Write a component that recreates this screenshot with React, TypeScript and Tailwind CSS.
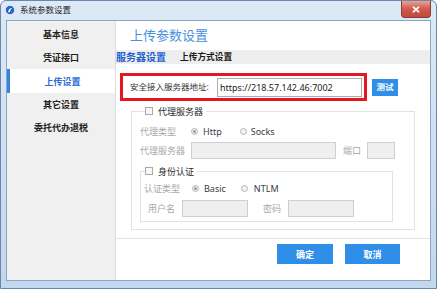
import React from "react";

function Radio({ checked }: { checked?: boolean }) {
  return (
    <span className="w-[7px] h-[7px] rounded-full border border-[#b5b5b5] bg-[#f3f3f3] flex items-center justify-center shrink-0">
      {checked && <span className="w-[3px] h-[3px] rounded-full bg-[#9c9c9c]" />}
    </span>
  );
}

function Check() {
  return <span className="w-[8px] h-[8px] border border-[#a8a8a8] bg-[#f7f7f7] shrink-0" />;
}

function Field({ w }: { w: string }) {
  return <div className={`h-[17px] border border-[#cfcfcf] bg-[#efefef] ${w}`} />;
}

export default function App() {
  const items = ["基本信息", "凭证接口", "上传设置", "其它设置", "委托代办退税"];
  return (
    <div className="w-[437px] h-[289px] bg-white font-['Noto_Sans','Noto_Sans_CJK_SC',sans-serif]">
      <div className="w-full h-full flex flex-col border border-[#6a86aa] rounded-t-[6px] bg-gradient-to-b from-[#dde9f6] to-[#c3d7ed] overflow-hidden">
        {/* title bar */}
        <div className="h-[19px] flex items-start shrink-0">
          <div className="flex items-center h-[18px] pl-[4px] gap-[5px]">
            <svg width="10" height="10" viewBox="0 0 10 10">
              <circle cx="5" cy="5" r="4.6" fill="#2364c4" stroke="#e8f0fa" strokeWidth="0.8" />
              <path d="M3 7 C3.5 4.5 5 3 7.2 2.8 C6 4 5.2 5.5 4.8 7.3 Z" fill="#ffffff" />
            </svg>
            <span className="text-[8.5px] leading-none text-[#1e1e1e]">系统参数设置</span>
          </div>
          <div className="ml-auto mr-[5px] w-[30px] h-[17px] rounded-b-[4px] border border-t-0 border-[#8b3b33] bg-gradient-to-b from-[#e6a296] via-[#d0594c] to-[#c4473b] flex items-center justify-center">
            <svg width="8" height="7" viewBox="0 0 8 7">
              <path d="M1 0.8 L7 6.2 M7 0.8 L1 6.2" stroke="#ffffff" strokeWidth="1.8" />
            </svg>
          </div>
        </div>

        {/* client */}
        <div className="flex-1 ml-[5px] mr-[5px] mb-[7px] border border-[#8ba5c4] flex bg-white">
          {/* sidebar */}
          <div className="w-[109px] shrink-0 bg-[#f0f0f0] border-r border-[#dcdcdc] pt-[2px] flex flex-col">
            {items.map((t, i) =>
              i === 2 ? (
                <div
                  key={t}
                  className="h-[24px] flex items-center justify-center bg-white border-l-[3px] border-[#3286e0] text-[9px] font-bold text-[#2b6dd6] leading-none"
                >
                  {t}
                </div>
              ) : (
                <div
                  key={t}
                  className="h-[23px] flex items-center justify-center text-[9px] font-bold text-[#222] leading-none"
                >
                  {t}
                </div>
              )
            )}
          </div>

          {/* content */}
          <div className="flex-1 flex flex-col">
            <div className="h-[217px] flex flex-col">
              <div className="h-[29px] flex items-center pl-[14px] text-[13px] leading-none text-[#4a90e0]">
                上传参数设置
              </div>
              <div className="h-[14px] bg-[#eeeeee] flex items-center leading-none">
                <span className="text-[10px] font-bold text-[#1f5fd0]">服务器设置</span>
                <span className="ml-[14px] text-[8.7px] font-bold text-[#1a1a1a]">上传方式设置</span>
              </div>

              {/* address row */}
              <div className="mt-[9px] pl-[4px] flex items-center">
                <div className="w-[247px] h-[28px] border-[3px] border-[#e3171f] flex items-center pl-[7px] pr-[2px]">
                  <span className="text-[8.5px] leading-none text-[#333]">安全接入服务器地址:</span>
                  <div className="ml-auto w-[145px] h-[19px] border border-[#ababab] bg-white flex items-center pl-[2px] text-[9px] leading-none text-[#222]">
                    https://218.57.142.46:7002
                  </div>
                </div>
                <div className="ml-[5px] w-[26px] h-[17px] bg-[#2f8ee8] flex items-center justify-center text-[8.5px] font-bold text-white leading-none">
                  测试
                </div>
              </div>

              {/* proxy group */}
              <fieldset className="mt-[4px] ml-[15px] w-[284px] border border-[#e2e2e2] pl-[8px] pb-[7px]">
                <legend className="ml-[5px] pr-[3px] h-[12px] flex items-center gap-[5px] leading-none">
                  <Check />
                  <span className="text-[9px] text-[#2a2a2a]">代理服务器</span>
                </legend>
                <div className="pt-[5px]">
                  <div className="h-[18px] flex items-center text-[9px] leading-none">
                    <span className="w-[51px] text-[#a8a8a8]">代理类型</span>
                    <Radio checked />
                    <span className="ml-[5px] text-[#3a3a3a]">Http</span>
                    <span className="ml-[18px]">
                      <Radio />
                    </span>
                    <span className="ml-[4px] text-[#3a3a3a]">Socks</span>
                  </div>
                  <div className="mt-[1px] h-[18px] flex items-center text-[9px] leading-none">
                    <span className="w-[51px] text-[#a8a8a8]">代理服务器</span>
                    <Field w="w-[145px]" />
                    <span className="ml-[7px] text-[#a8a8a8]">端口</span>
                    <div className="ml-[6px]">
                      <Field w="w-[28px]" />
                    </div>
                  </div>

                  {/* auth group */}
                  <fieldset className="mt-[6px] w-[253px] border border-[#e2e2e2] pb-[4px]">
                    <legend className="ml-[4px] pr-[3px] h-[12px] flex items-center gap-[5px] leading-none">
                      <Check />
                      <span className="text-[9px] text-[#2a2a2a]">身份认证</span>
                    </legend>
                    <div className="pt-[2px]">
                      <div className="h-[18px] flex items-center pl-[3px] text-[9px] leading-none">
                        <span className="w-[48px] text-[#a8a8a8]">认证类型</span>
                        <Radio checked />
                        <span className="ml-[5px] text-[#3a3a3a]">Basic</span>
                        <span className="ml-[15px]">
                          <Radio />
                        </span>
                        <span className="ml-[6px] text-[#3a3a3a]">NTLM</span>
                      </div>
                      <div className="mt-[2px] h-[18px] flex items-center pl-[7px] text-[9px] leading-none">
                        <span className="w-[34px] text-[#a8a8a8]">用户名</span>
                        <Field w="w-[66px]" />
                        <span className="ml-[15px] w-[25px] text-[#a8a8a8]">密码</span>
                        <Field w="w-[66px]" />
                      </div>
                    </div>
                  </fieldset>
                </div>
              </fieldset>
            </div>

            {/* footer */}
            <div className="flex-1 border-t border-[#e4e4e4] pt-[5px] pr-[30px] flex justify-end items-start gap-[12px]">
              <div className="w-[56px] h-[20px] bg-[#2f8ee8] flex items-center justify-center text-[9px] font-bold text-white leading-none">
                确定
              </div>
              <div className="w-[55px] h-[20px] bg-[#2f8ee8] flex items-center justify-center text-[9px] font-bold text-white leading-none">
                取消
              </div>
            </div>
          </div>
        </div>
      </div>
    </div>
  );
}
